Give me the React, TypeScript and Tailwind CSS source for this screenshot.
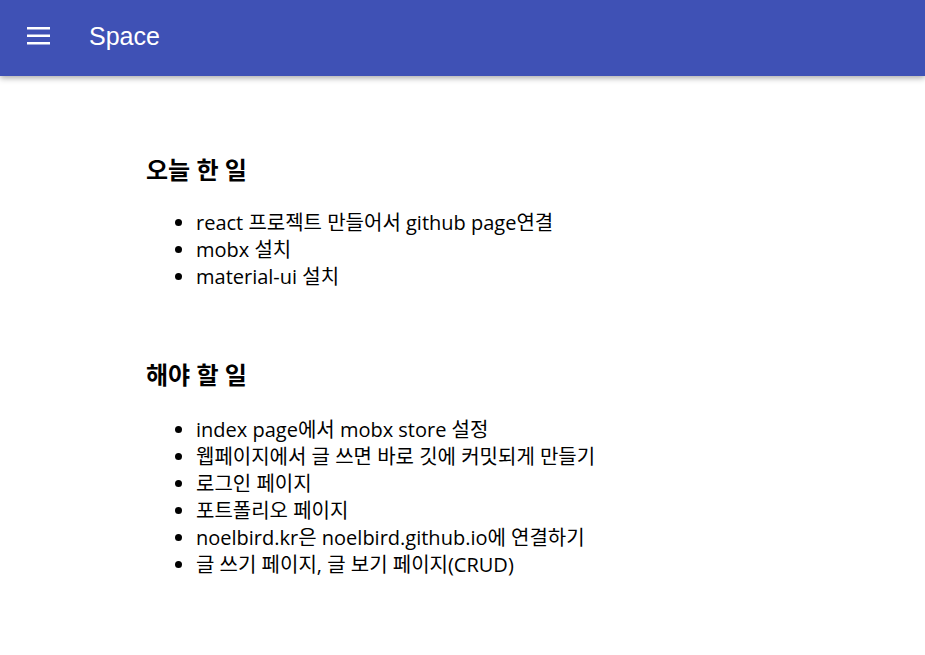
import React from "react";

const done = ["react 프로젝트 만들어서 github page연결", "mobx 설치", "material-ui 설치"];
const todo = [
  "index page에서 mobx store 설정",
  "웹페이지에서 글 쓰면 바로 깃에 커밋되게 만들기",
  "로그인 페이지",
  "포트폴리오 페이지",
  "noelbird.kr은 noelbird.github.io에 연결하기",
  "글 쓰기 페이지, 글 보기 페이지(CRUD)",
];

const font = { fontFamily: '"Open Sans", "Noto Sans CJK KR", sans-serif' };

function Section({ title, items, listTop }: { title: string; items: string[]; listTop: string }) {
  return (
    <section>
      <h2 className="text-[24px] font-bold leading-[32px] text-black">{title}</h2>
      <ul className={`${listTop} list-disc pl-[50px] text-[20px] leading-[27px] text-black`}>
        {items.map((t) => (
          <li key={t}>{t}</li>
        ))}
      </ul>
    </section>
  );
}

export default function App() {
  return (
    <div className="min-h-[655px] w-full bg-white" style={font}>
      {/* App bar */}
      <header className="flex h-[76px] items-center bg-[#3f51b5] px-[27px] shadow-[0_2px_6px_rgba(0,0,0,0.35)]">
        <svg width="24" height="20" viewBox="0 0 24 20" className="mt-[-4px]">
          <rect x="0" y="1" width="23" height="2.5" fill="#fff" />
          <rect x="0" y="8.5" width="23" height="2.5" fill="#fff" />
          <rect x="0" y="16" width="23" height="2.5" fill="#fff" />
        </svg>
        <h1 className="ml-[38px] mt-[-2px] text-[25px] text-white" style={{ fontFamily: '"Liberation Sans", Arial, sans-serif' }}>
          Space
        </h1>
      </header>

      <main className="flex flex-col gap-[69px] pl-[146px] pt-[78px]">
        <Section title="오늘 한 일" items={done} listTop="mt-[23px]" />
        <Section title="해야 할 일" items={todo} listTop="mt-[25px]" />
      </main>
    </div>
  );
}
